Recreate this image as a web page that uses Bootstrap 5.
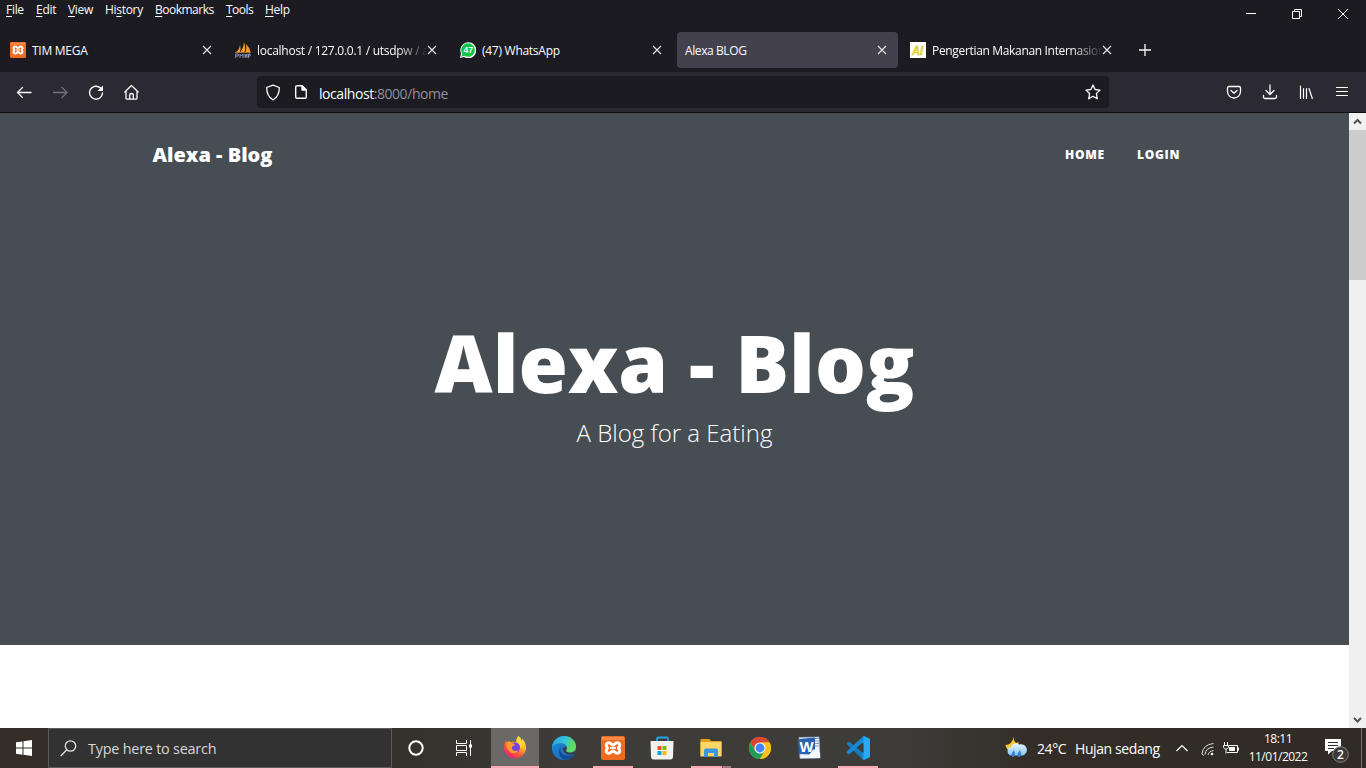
<!DOCTYPE html>
<html lang="en">
<head>
<meta charset="utf-8">
<meta name="viewport" content="width=device-width, initial-scale=1">
<title>Alexa BLOG</title>
<link href="https://cdn.jsdelivr.net/npm/bootstrap@5.3.0/dist/css/bootstrap.min.css" rel="stylesheet">
<style>
body{width:1366px;height:768px;overflow:hidden;font-family:"Open Sans","Noto Sans",sans-serif;font-size:12px;line-height:16px;background:#fff}
svg{display:block;flex:none}
.ff-top{height:72px;background:#1c1b22;color:#fbfbfe}
.ff-menus{height:32px;padding-left:6px;padding-top:2px}
.ff-menus span{white-space:nowrap;letter-spacing:-.3px}
.ff-menus span.wide-word{letter-spacing:-.5px}
.ff-menus u{text-underline-offset:2px}
.win-btns{padding:8px 17px 0 0;gap:34px}
.ff-tabs{height:36px;padding-left:2px;gap:4px}
.ff-tab{width:221px;height:36px;padding:0 11px 0 8px;border-radius:4px}
.ff-tab.on{background:#42414d}
.fav{margin-right:6px}
.tab-name{flex:1 1 0;min-width:0;overflow:hidden;white-space:nowrap;letter-spacing:-.27px;padding-top:1px}
.tab-name.fade-end{-webkit-mask-image:linear-gradient(90deg,#000 82%,transparent 101%);mask-image:linear-gradient(90deg,#000 82%,transparent 101%)}
.ff-bar{height:41px;background:#2b2a33;border-bottom:1px solid #0c0c0d;padding:0 14px 0 14px}
.url-box{width:852px;height:32px;margin-left:115px;background:#1c1b22;border-radius:4px;padding:0 8px;color:#8f8f98;font-size:14px;letter-spacing:-.44px}
.url-box b{font-weight:400;color:#fbfbfe}
.viewport{height:615px}
.hero{height:532px;background:#474e53;color:#fff}
.hero .navbar{padding:27px 168px 0 152px;height:82px;align-items:flex-start}
.brand-name{font-weight:800;font-size:20px;line-height:30px;padding-left:.5px}
.site-nav{gap:32px;font-size:12px;font-weight:800;letter-spacing:.75px;line-height:30px;margin-right:.7px}
.hero h1{font-size:80px;font-weight:800;line-height:88px;margin:123px 0 0}
.hero p{font-size:24px;font-weight:300;line-height:26px;margin:14px 0 0}
.scroller{width:17px;background:#f0f0f0}
.thumb{height:150px;background:#cdcdcd}
.taskbar{height:40px;background:linear-gradient(90deg,#342e27 0,#35312b 30%,#3d3c38 42%,#3d3c38 66%,#332d27 76%,#302b26 100%);color:#fff}
.search-box{width:344px;height:40px;background:#323232;border:1px solid #5c5b59;padding-left:11px;gap:11px;color:#d8d8d8;font-size:14.4px;letter-spacing:-.22px}
.search-box span{padding-top:1px}
.apps{gap:1px}
.app{width:48px;height:40px;position:relative}
.app.focus-app{background:#6a6967}
.app.run::after{content:"";position:absolute;left:4px;right:4px;bottom:0;height:2px;background:#ffa9b4}
.app.focus-app::after{left:0;right:0}
.app.multi::after{background:linear-gradient(90deg,#ffa9b4 31px,#6b5353 31px,#6b5353 32px,#a47b80 32px)}
.weather{font-size:14px;letter-spacing:-.4px;white-space:nowrap}
.weather span{padding-top:2px}
.clock{font-size:12px;line-height:18px;letter-spacing:-.5px;width:60px;text-align:center;white-space:nowrap}
.peek{width:1px;height:40px;background:#777470}
</style>
</head>
<body>
<svg width="0" height="0" class="position-absolute">
<defs>
<symbol id="x" viewBox="0 0 10 10"><path d="M1 1l8 8M9 1l-8 8" stroke="#e8e8ec" stroke-width="1.1"/></symbol>
<symbol id="xampp" viewBox="0 0 24 24"><rect width="24" height="24" rx="2" fill="#ee6c20"/><path d="M1 1h22v3H1z" fill="#f9a877" opacity=".5"/><path d="M8 6.700C5.500 6.700 4.800 8.500 5.500 10.200L6.500 12L5.500 13.800C4.800 15.500 5.500 17.300 8 17.300C10.300 17.300 10.300 15 12 15S13.700 17.300 16 17.300C18.500 17.300 19.200 15.500 18.500 13.800L17.500 12L18.500 10.200C19.200 8.500 18.500 6.700 16 6.700C13.700 6.700 13.700 9 12 9S10.300 6.700 8 6.700Z" fill="none" stroke="#fff" stroke-width="2.900" stroke-linejoin="round"/><path d="M9 12h6" stroke="#fff" stroke-width="1.800"/></symbol>
<linearGradient id="fx" x1=".9" y1="0" x2=".2" y2="1"><stop stop-color="#fff44f"/><stop offset=".35" stop-color="#ffbd2f"/><stop offset=".65" stop-color="#ff5a36"/><stop offset="1" stop-color="#e31587"/></linearGradient>
<linearGradient id="eg" x1="0" y1="0" x2="1" y2=".3"><stop stop-color="#269fe0"/><stop offset=".55" stop-color="#33c2d8"/><stop offset="1" stop-color="#66df58"/></linearGradient>
<linearGradient id="eb" x1="0" y1="0" x2="1" y2="1"><stop stop-color="#1c8fdc"/><stop offset="1" stop-color="#1a5fb4"/></linearGradient>
<linearGradient id="cl" x1="0" y1="0" x2="0" y2="1"><stop stop-color="#e8f4ff"/><stop offset="1" stop-color="#8bc3f2"/></linearGradient>
</defs>
</svg>

<header class="ff-top">
  <div class="ff-menus d-flex justify-content-between align-items-start">
    <div class="d-flex">
      <span style="width:30px"><u>F</u>ile</span><span style="width:32px"><u>E</u>dit</span><span style="width:37px"><u>V</u>iew</span><span style="width:50px">Hi<u>s</u>tory</span><span class="wide-word" style="width:71px"><u>B</u>ookmarks</span><span class="wide-word" style="width:39px"><u>T</u>ools</span><span><u>H</u>elp</span>
    </div>
    <div class="win-btns d-flex" style="margin-top:-3px">
      <svg width="12" height="12" fill="none" stroke="#fff"><path d="M1 6.500h10"/></svg>
      <svg width="12" height="12" fill="none" stroke="#fff" style="margin-top:1px"><path d="M1.500 3.500h7v7h-7zM3.500 3v-1.500h7v7H9"/></svg>
      <svg width="12" height="12" fill="none" stroke="#fff" style="margin-top:1px"><path d="M1 1l10 10M11 1L1 11"/></svg>
    </div>
  </div>
  <div class="ff-tabs d-flex align-items-center">
    <div class="ff-tab d-flex align-items-center"><svg width="16" height="16" class="fav"><use href="#xampp"/></svg><span class="tab-name">TIM MEGA</span><svg width="10" height="10"><use href="#x"/></svg></div>
    <div class="ff-tab d-flex align-items-center">
      <svg width="16" height="16" viewBox="0 0 16 16" class="fav"><path d="M1 10Q5 7 5 2Q6 7 5 10zM5.500 10Q9 5 9 0Q11 6 9.500 10zM11 2Q15 6 15.500 10H10.500Q12 6 11 2z" fill="#f89c2a"/><path d="M0 10.500h16" stroke="#a96d35"/><path d="M.7 16v-4h2.500v2H.7M5 16v-4l1.500 2L8 12v4M10 16v-4l1 3 1-3v4M13.500 16v-4H15v2h-1.500" fill="none" stroke="#8c91b4"/></svg>
      <span class="tab-name fade-end">localhost / 127.0.0.1 / utsdpw / a</span><svg width="10" height="10"><use href="#x"/></svg></div>
    <div class="ff-tab d-flex align-items-center">
      <svg width="16" height="16" viewBox="0 0 16 16" class="fav"><path d="M0 16L1 11.500A8 8 0 1 1 4 15z" fill="#fff"/><path d="M1.300 14.700L2.200 11.500A6.800 6.800 0 1 1 4.500 13.800z" fill="#0ec44c"/><text x="8.200" y="10.900" text-anchor="middle" font-size="8.500" font-weight="700" font-family="Liberation Sans" fill="#fff">47</text></svg>
      <span class="tab-name">(47) WhatsApp</span><svg width="10" height="10"><use href="#x"/></svg></div>
    <div class="ff-tab on d-flex align-items-center"><span class="tab-name" style="letter-spacing:-.4px">Alexa BLOG</span><svg width="10" height="10"><use href="#x"/></svg></div>
    <div class="ff-tab d-flex align-items-center">
      <svg width="16" height="16" viewBox="0 0 16 16" class="fav"><path fill="#fff" d="M0 0h16v16H0z"/><text x="7.500" y="12.500" text-anchor="middle" font-size="12" font-weight="700" font-style="italic" font-family="Liberation Sans" fill="#f8ee16" stroke="#b5ad20" stroke-width=".4" textLength="11" lengthAdjust="spacingAndGlyphs">Ai</text></svg>
      <span class="tab-name fade-end" style="letter-spacing:-.33px">Pengertian Makanan Internasion</span><svg width="10" height="10"><use href="#x"/></svg></div>
    <svg width="12" height="12" style="margin-left:11.500px" stroke="#fbfbfe" stroke-width="1.300"><path d="M6 0v12M0 6h12"/></svg>
  </div>
</header>

<div class="ff-bar d-flex align-items-center">
  <div class="d-flex" style="gap:16px">
    <svg width="20" height="20" viewBox="0 0 20 20" fill="none" stroke="#fbfbfe" stroke-width="1.300" stroke-linecap="round" stroke-linejoin="round"><path d="M17 10.500H3.500M8.500 5.500L3.500 10.500 8.500 15.500"/></svg>
    <svg width="20" height="20" viewBox="0 0 20 20" fill="none" stroke="#74737b" stroke-width="1.300" stroke-linecap="round" stroke-linejoin="round"><path d="M3.500 10.500h13.500M12 5.500L17 10.500 12 15.500"/></svg>
    <svg width="20" height="20" viewBox="0 0 20 20" fill="none" stroke="#fbfbfe" stroke-width="1.400" stroke-linecap="round"><path d="M16.500 11A6.500 6.500 0 1 1 14.500 6"/><path d="M17 3.500v5.500h-5.500z" fill="#fbfbfe" stroke="none"/></svg>
    <svg width="20" height="20" viewBox="0 0 20 20" fill="none" stroke="#fbfbfe" stroke-width="1.300" stroke-linejoin="round" stroke-linecap="round"><path d="M2.800 10L9.500 3.500l6.700 6.500M4 9V16Q4 17.200 5.200 17.200H13.800Q15 17.200 15 16V9M7.700 17V12.800Q7.700 11.500 9.500 11.500T11.300 12.800V17"/></svg>
  </div>
  <div class="url-box d-flex align-items-center">
    <svg width="16" height="17" viewBox="0 0 16 17" fill="none" stroke="#fbfbfe" stroke-width="1.300" stroke-linejoin="round"><path d="M8 1.200L14.300 3.500C14.300 10 12.500 13.500 8 15.800C3.500 13.500 1.700 10 1.700 3.500Z"/></svg>
    <svg width="16" height="16" viewBox="0 0 16 16" fill="none" stroke="#fbfbfe" stroke-width="1.400" stroke-linejoin="round" style="margin-left:12px"><path d="M4 1.700H9L13.300 6V13Q13.300 14.300 12 14.300H4Q2.700 14.300 2.700 13V3Q2.700 1.700 4 1.700z"/><path d="M9 1.700V6h4.300z" fill="#fbfbfe"/></svg>
    <span style="margin-left:10px;padding-top:3px"><b>localhost</b>:8000/home</span>
    <svg width="16" height="16" viewBox="0 0 16 16" fill="none" stroke="#fbfbfe" stroke-width="1.300" stroke-linejoin="round" class="ms-auto"><path d="M8 1L10.100 5.500L15 6.100L11.400 9.500L12.300 14.800L8 12.300L3.700 14.800L4.600 9.500L1 6.100L5.900 5.500Z"/></svg>
  </div>
  <div class="d-flex ms-auto" style="gap:20px;margin-right:2px">
    <svg width="16" height="16" viewBox="0 0 16 16" fill="none" stroke="#fbfbfe" stroke-width="1.300" stroke-linecap="round" stroke-linejoin="round"><path d="M3 2.500H13Q14.500 2.500 14.500 4V7.500A6.500 6.500 0 0 1 1.500 7.500V4Q1.500 2.500 3 2.500zM5 6.500l3 2.800 3-2.800"/></svg>
    <svg width="16" height="16" viewBox="0 0 16 16" fill="none" stroke="#fbfbfe" stroke-width="1.300" stroke-linecap="round" stroke-linejoin="round"><path d="M8 .8V10M4 6.500L8 10.500l4-4M1.500 11.500V13Q1.500 14.500 3 14.500H13Q14.500 14.500 14.500 13V11.500"/></svg>
    <svg width="16" height="16" viewBox="0 0 16 16" fill="none" stroke="#fbfbfe" stroke-width="1.200" stroke-linecap="round"><path d="M2.500 2v12.500M5.500 4.500v10M8.500 4.500v10M11 4.500l3.300 10"/></svg>
    <svg width="16" height="16" viewBox="0 0 16 16" fill="none" stroke="#fbfbfe" stroke-width="1.200" stroke-linecap="round"><path d="M2.500 3.500h11M2.500 7.500h11M2.500 11.500h11"/></svg>
  </div>
</div>

<div class="viewport d-flex">
  <main class="flex-grow-1">
    <section class="hero">
      <nav class="navbar d-flex justify-content-between">
        <span class="brand-name">Alexa - Blog</span>
        <div class="site-nav d-flex"><span>HOME</span><span>LOGIN</span></div>
      </nav>
      <div class="text-center"><h1>Alexa - Blog</h1><p>A Blog for a Eating</p></div>
    </section>
  </main>
  <div class="scroller d-flex flex-column">
    <svg width="17" height="17" fill="none" stroke="#505050" stroke-width="2"><path d="M5 10.500L8.500 7l3.500 3.500"/></svg>
    <div class="thumb"></div>
    <svg width="17" height="17" class="mt-auto" fill="none" stroke="#505050" stroke-width="2"><path d="M5 7L8.500 10.500l3.500-3.500"/></svg>
  </div>
</div>

<footer class="taskbar d-flex align-items-center">
  <div class="d-flex justify-content-center" style="width:48px"><svg width="16" height="16" fill="#fff"><path d="M0 2.300L6.500 1.400V7.500H0zM7.500 1.200L16 0V7.500H7.500zM0 8.500H6.500V14.700L0 13.700zM7.500 8.500H16V16L7.500 14.800z"/></svg></div>
  <div class="search-box d-flex align-items-center"><svg width="17" height="17" fill="none" stroke="#e4e4e4" stroke-width="1.300"><circle cx="10.500" cy="6" r="5.200"/><path d="M6.800 9.800L.7 16"/></svg><span>Type here to search</span></div>
  <div class="apps d-flex">
    <div class="app d-flex align-items-center justify-content-center"><svg width="16" height="16" fill="none" stroke="#fff" stroke-width="2"><circle cx="8" cy="8" r="6.700"/></svg></div>
    <div class="app d-flex align-items-center justify-content-center" style="margin-left:-1px"><svg width="16" height="16" fill="none" stroke="#fff"><path d="M.5 0v3.500h10V0M.5 16v-3.500h10V16M.5 5.500h10v5H.5zM14.500 0v16"/><path d="M13 4.500h3v3h-3z" fill="#fff" stroke="none"/></svg></div>
    <div class="app run focus-app d-flex align-items-center justify-content-center" style="margin-left:2px"><svg width="24" height="24" viewBox="0 0 24 24"><path d="M15.500 0Q18 1.500 19 5Q19.500 3.500 19 2.500Q23.500 7 23 13A11.200 11 0 0 1 .8 12.500Q.7 8 3 4.500Q3.200 6 4 6.500Q5 5 7.500 6Q10 5.500 13.500 6Q13 2.500 15.500 0z" fill="url(#fx)"/><circle cx="12" cy="11.500" r="5" fill="#7542e5"/><path d="M3.500 6.500Q5 5 8 6Q9 8 12 8Q12 9.500 9 10.500Q8 13 10.500 14.500Q13 15.500 15 14Q13 18 9 17Q4 15 3.500 10z" fill="#ff9c26"/><path d="M13.500 5.500Q18 7.500 17.500 13Q20 10 18.500 6L15.500 0Q13 2.500 13.500 5.500z" fill="#ffd83b"/></svg></div>
    <div class="app d-flex align-items-center justify-content-center"><svg width="24" height="24" viewBox="0 0 24 24"><circle cx="12" cy="12" r="12" fill="url(#eb)"/><path d="M0 11C1 4 6 0 12 0C19 0 24 5 24 10.500C24 15 20.500 16.500 17.500 16.500C14.500 16.500 13.500 15 14.500 13.500C15.500 12 15 7.500 9.500 7.200C5 7 1.500 8.500 0 11z" fill="url(#eg)"/><path d="M9.200 10C6.500 15 10 20.500 17 20Q20 19.800 22.500 17.800Q19 23 13.500 23.800C7 22 5 15 9.200 10z" fill="#124b93"/><path d="M14.500 13.500Q13 15.500 16 16.500Q20.500 17.500 23.600 14.500L22.500 17.800Q17 20 13 17Q10 14 11.500 11.500Q13 10 14.800 11.500z" fill="#3d3c38"/></svg></div>
    <div class="app run d-flex align-items-center justify-content-center"><svg width="24" height="24"><use href="#xampp"/></svg></div>
    <div class="app d-flex align-items-center justify-content-center" style="padding-right:1px"><svg width="24" height="24" viewBox="0 0 24 24"><path d="M7 6V3Q7 1.500 8.500 1.500H16.500Q18 1.500 18 3V6" fill="none" stroke="#22a4e8" stroke-width="1.800"/><path d="M.5 5H23.500L23 21Q22.800 23.500 20.500 23.500H3.500Q1.200 23.500 1 21z" fill="#f2f2f2"/><path d="M7.500 10h4v4h-4z" fill="#f25022"/><path d="M12.500 10h4v4h-4z" fill="#7fba00"/><path d="M7.500 15h4v4h-4z" fill="#00a4ef"/><path d="M12.500 15h4v4h-4z" fill="#ffb900"/></svg></div>
    <div class="app run multi d-flex align-items-center justify-content-center"><svg width="24" height="24" viewBox="0 0 24 24"><path d="M1.500 3H10.500L12 5H22.500V20H1.500z" fill="#e2a11b"/><path d="M1.500 6H22.500V20.500H1.500z" fill="#fbd669"/><path d="M5 21V14.500Q5 12.500 7 12.500H17Q19 12.500 19 14.500V21H15V17H9V21z" fill="#3b97dc"/></svg></div>
    <div class="app d-flex align-items-center justify-content-center"><svg width="24" height="24" viewBox="0 0 24 24"><circle cx="12" cy="12" r="11" fill="#fbc116"/><path d="M2.470 6.500A11 11 0 0 1 21.530 6.500H12L7.200 14.700z" fill="#db4437"/><path d="M2.470 6.500A11 11 0 0 0 12 23L16.800 14.700H7.200z" fill="#229b58"/><path d="M21.530 6.500A11 11 0 0 1 12 23L16.800 14.700Q18 9 12 6.500z" fill="#fbc116"/><circle cx="12" cy="12" r="5.600" fill="#f5f5f5"/><circle cx="12" cy="12" r="4.400" fill="#4285f4"/></svg></div>
    <div class="app d-flex align-items-center justify-content-center" style="padding-right:1px"><svg width="24" height="24" viewBox="0 0 24 24"><path d="M2 1.500L22 1L23 22L3 22.500z" fill="#f2f5fb" stroke="#9db5da" stroke-width=".7"/><path d="M18 2.500h4M18 5h4M18 7.500h4M18 10h4" stroke="#789bcd"/><path d="M1.500 3L18 1.500V13L12 18.500L1.500 18z" fill="#2862ae"/><text x="9.500" y="15.500" font-size="15" text-anchor="middle" font-family="Liberation Sans" font-weight="700" fill="#fff">W</text><path d="M12 20L16 13.500L23 17V22H13z" fill="#f7f8fd"/></svg></div>
    <div class="app run d-flex align-items-center justify-content-center"><svg width="24" height="24" viewBox="0 0 24 24"><path d="M17.500 0L24 3V21L17.500 24L1 8.500Q0 7.700 1 6.800L2 6Q2.800 5.500 3.500 6L17.500 17V0z" fill="#147dc2"/><path d="M17.500 24L16 22.500L16.500 6.500L3.500 18Q2.800 18.500 2 18L1 17Q0 16.200 1 15.300L17.500 0L24 3V21z" fill="#168ad5"/><path d="M17.500 0L24 3V21L17.500 24z" fill="#2ba9f2"/><path d="M17.500 7v10L11 12z" fill="#3d3c38"/></svg></div>
  </div>
  <div class="weather d-flex align-items-center ms-auto">
    <svg width="24" height="24" viewBox="0 0 24 24"><path d="M9 0Q8 4 10.500 6.500Q13 7 14 6L12 12L5 15Q1 13 .5 9Q7 9 9 0z" fill="#fbc62f"/><path d="M6.500 19.500A4.300 4.300 0 0 1 6 11A5 5 0 0 1 14 8.500A5.500 5.500 0 1 1 18 19.500z" fill="url(#cl)"/><path d="M9 14Q5 19 7 20.500T10 19Q10 17 9 14zM15 14Q11 19 13 20.500T16 19Q16 17 15 14z" fill="#3183d5"/></svg>
    <span style="margin-left:8px;width:38px">24°C</span><span style="width:85px">Hujan sedang</span>
  </div>
  <svg width="12" height="8" fill="none" stroke="#fff" stroke-width="1.200" style="margin-left:16px"><path d="M.5 7L6 1.500 11.500 7"/></svg>
  <svg width="14" height="14" fill="none" stroke="#ddd" style="margin-left:13px;margin-top:2px"><path d="M1 12Q2 2.500 12.500 1.500M4 12.500Q4.500 6 12.500 5M7 13Q7.500 9.500 12.500 8.500" /><circle cx="11" cy="12" r="1.300" fill="#fff" stroke="none"/><path d="M1 12l2 1.500"/></svg>
  <svg width="16" height="13" fill="none" stroke="#fff" style="margin-left:8px"><path d="M6 3.500h8.500v7H4M15.500 5.500v3M1.500 0v3M4.500 0v3M.5 3.500h5v2l-2 1.500h-1L.5 5.500zM3 7v4.500"/><path d="M6.500 5.500h5v3h-5z" fill="#fff"/></svg>
  <div class="clock" style="margin-left:9px">18:11<br>11/01/2022</div>
  <svg width="25" height="25" viewBox="0 0 25 25" style="margin-left:16px;margin-top:4px"><path d="M1 1h16v12H8l-4 3.500V13H1z" fill="#fff"/><path d="M4 4.500h10M4 7.500h10M4 10.500h6" stroke="#332d27"/><circle cx="16.500" cy="16.500" r="7.800" fill="#3d3b39" stroke="#85817d"/><text x="16.500" y="20.800" text-anchor="middle" font-size="12" font-weight="600" fill="#fff">2</text></svg>
  <div class="peek" style="margin-left:12px;margin-right:4px"></div>
</footer>
<script src="https://cdn.jsdelivr.net/npm/bootstrap@5.3.0/dist/js/bootstrap.bundle.min.js"></script>
</body>
</html>
